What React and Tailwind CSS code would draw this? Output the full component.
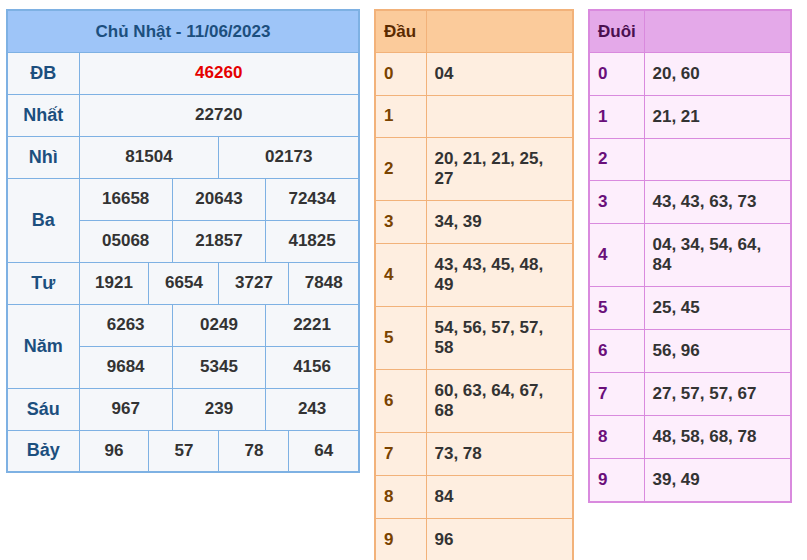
const F = { fontFamily: '"Liberation Sans", Arial, sans-serif' }

const kq = [
  ['ĐB', [['46260', 12, true]]],
  ['Nhất', [['22720', 12]]],
  ['Nhì', [['81504', 6], ['02173', 6]]],
  ['Ba', [['16658', 4], ['20643', 4], ['72434', 4]], [['05068', 4], ['21857', 4], ['41825', 4]]],
  ['Tư', [['1921', 3], ['6654', 3], ['3727', 3], ['7848', 3]]],
  ['Năm', [['6263', 4], ['0249', 4], ['2221', 4]], [['9684', 4], ['5345', 4], ['4156', 4]]],
  ['Sáu', [['967', 4], ['239', 4], ['243', 4]]],
  ['Bảy', [['96', 3], ['57', 3], ['78', 3], ['64', 3]]],
]

const dau = ['04', '', '20, 21, 21, 25, 27', '34, 39', '43, 43, 45, 48, 49', '54, 56, 57, 57, 58', '60, 63, 64, 67, 68', '73, 78', '84', '96']
const duoi = ['20, 60', '21, 21', '', '43, 43, 63, 73', '04, 34, 54, 64, 84', '25, 45', '56, 96', '27, 57, 57, 67', '48, 58, 68, 78', '39, 49']

function Cells({ list }) {
  return list.map(([v, span, red], i) => (
    <td key={i} colSpan={span} className={`border border-[#7eb1e3] text-center ${red ? 'text-[#e50000]' : 'text-[#333]'}`}>{v}</td>
  ))
}

export default function App() {
  return (
    <div style={F} className="w-[807px] h-[560px] bg-white flex items-start gap-[14px] pl-[6px] pt-[9px] text-[17px] font-semibold">
      <table className="w-[354px] border-collapse border-2 border-[#7eb1e3] table-fixed">
        <colgroup>
          <col className="w-[72px]" />
          {Array.from({ length: 12 }).map((_, i) => <col key={i} />)}
        </colgroup>
        <tbody className="bg-[#f5f7fa]">
          <tr className="h-[42px] bg-[#9ec5f8]">
            <td colSpan={13} className="text-center text-[#1c4f7e]">Chủ Nhật - 11/06/2023</td>
          </tr>
          {kq.map(([label, ...rows]) => rows.map((r, j) => (
            <tr key={label + j} className="h-[42px]">
              {j === 0 && <td rowSpan={rows.length} className="border border-[#7eb1e3] text-center text-[#1c4f7e] text-[18px]">{label}</td>}
              <Cells list={r} />
            </tr>
          )))}
        </tbody>
      </table>

      <table className="w-[200px] border-collapse border-2 border-[#f2b27a] table-fixed">
        <colgroup><col className="w-[51px]" /><col /></colgroup>
        <tbody className="bg-[#feeee0]">
          <tr className="h-[42px] bg-[#fbcb9b]">
            <td className="border border-[#f2b27a] px-2 text-[#5a2a00]">Đầu</td>
            <td className="border border-[#f2b27a]"></td>
          </tr>
          {dau.map((v, i) => (
            <tr key={i}>
              <td className="border border-[#f2b27a] px-2 text-[#7a4300] h-[42px]">{i}</td>
              <td className="border border-[#f2b27a] pl-2 pr-6 py-[11px] leading-[20px] text-[#333]">{v}</td>
            </tr>
          ))}
        </tbody>
      </table>

      <table className="w-[204px] border-collapse border-2 border-[#d98ade] table-fixed">
        <colgroup><col className="w-[55px]" /><col /></colgroup>
        <tbody className="bg-[#fdeefc]">
          <tr className="h-[42px] bg-[#e4a9e9]">
            <td className="border border-[#d98ade] px-2 text-[#4a1050]">Đuôi</td>
            <td className="border border-[#d98ade]"></td>
          </tr>
          {duoi.map((v, i) => (
            <tr key={i}>
              <td className="border border-[#d98ade] px-2 text-[#6a0f7a] h-[42px]">{i}</td>
              <td className="border border-[#d98ade] pl-2 pr-6 py-[11px] leading-[20px] text-[#333]">{v}</td>
            </tr>
          ))}
        </tbody>
      </table>
    </div>
  )
}
